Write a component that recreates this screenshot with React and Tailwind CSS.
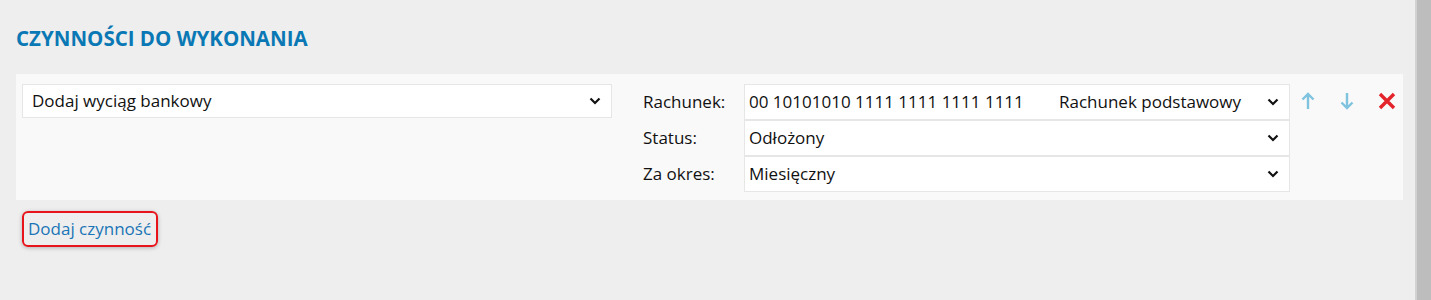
import React from 'react'

// Task list editor — "Czynności do wykonania"

function Chevron() {
  return (
    <svg width="12" height="8" viewBox="0 0 12 8" className="shrink-0">
      <path d="M1.5 1.5 L6 6 L10.5 1.5" fill="none" stroke="#111" strokeWidth="2.2" />
    </svg>
  )
}

function SelectBox({ children, className = '' }) {
  return (
    <div
      className={`flex items-center justify-between bg-white border border-[#e6e6e6] pl-[4px] pr-[10px] ${className}`}
    >
      {children}
      <Chevron />
    </div>
  )
}

const fields = [
  { label: 'Rachunek:', value: '00 10101010 1111 1111 1111 1111', extra: 'Rachunek podstawowy' },
  { label: 'Status:', value: 'Odłożony' },
  { label: 'Za okres:', value: 'Miesięczny' },
]

export default function App() {
  return (
    <div
      className="flex h-[300px] w-full bg-[#eeeeee] text-[#111] overflow-hidden"
      style={{ fontFamily: '"Open Sans", "Noto Sans", sans-serif' }}
    >
      <div className="flex-1 min-w-0 pl-[16px] pr-[12px]">
        {/* Header */}
        <h2 className="pt-[23px] h-[74px] text-[20.5px] font-bold text-[#0a78b4]">
          CZYNNOŚCI DO WYKONANIA
        </h2>

        {/* Task row */}
        <div className="flex bg-[#f9f9f9] h-[126px] pt-[10px] pl-[6px] text-[17px]">
          <SelectBox className="w-[590px] h-[34px] self-start">
            <span className="pl-[5px]">Dodaj wyciąg bankowy</span>
          </SelectBox>

          <div className="ml-[31px] flex flex-col">
            {fields.map((f) => (
              <div key={f.label} className="flex items-center">
                <span className="w-[101px]">{f.label}</span>
                <SelectBox className="w-[546px] h-[36px]">
                  <span className="flex-1 flex">
                    <span>{f.value}</span>
                    {f.extra && <span className="ml-auto mr-[26px]">{f.extra}</span>}
                  </span>
                </SelectBox>
              </div>
            ))}
          </div>

          {/* Row actions */}
          <div className="flex items-start gap-[23px] ml-[10px] pt-[8px]">
            <button className="w-[16px] h-[18px] flex items-center justify-center">
              <svg width="14" height="18" viewBox="0 0 14 18">
                <path d="M7 2 V17 M1.5 7.5 L7 2 L12.5 7.5" fill="none" stroke="#7fc3df" strokeWidth="2.4" />
              </svg>
            </button>
            <button className="w-[16px] h-[18px] flex items-center justify-center">
              <svg width="14" height="18" viewBox="0 0 14 18">
                <path d="M7 1 V16 M1.5 10.5 L7 16 L12.5 10.5" fill="none" stroke="#7fc3df" strokeWidth="2.4" />
              </svg>
            </button>
            <button className="w-[18px] h-[18px] flex items-center justify-center">
              <svg width="18" height="18" viewBox="0 0 18 18">
                <path d="M2 2 L16 16 M16 2 L2 16" fill="none" stroke="#e3242b" strokeWidth="3.4" />
              </svg>
            </button>
          </div>
        </div>

        {/* Add action */}
        <div className="pt-[11px] pl-[6px]">
          <button className="h-[36px] pl-[4px] pr-[5px] border-2 border-[#e8141c] rounded-[6px] shadow-[0_1px_4px_rgba(0,0,0,0.25)] text-[17px] text-[#1a75b6]">
            Dodaj czynność
          </button>
        </div>
      </div>

      {/* Scrollbar */}
      <div className="w-[16px] border-l-2 border-[#d2d2d2] bg-[#bdbdbd]" />
    </div>
  )
}
